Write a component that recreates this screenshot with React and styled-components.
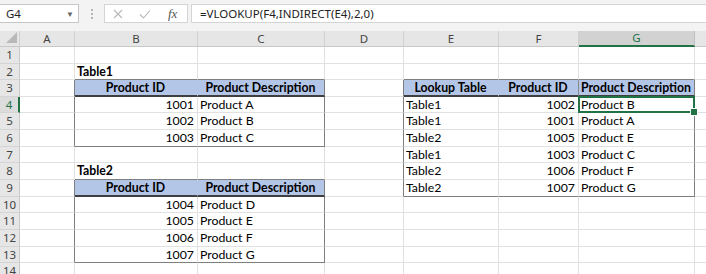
import React from 'react';
import styled, { createGlobalStyle } from 'styled-components';

const GlobalStyle = createGlobalStyle`
  html, body {
    margin: 0;
    padding: 0;
    background: #fff;
    overflow: hidden;
  }
  * { box-sizing: border-box; }
`;

const GREEN = '#217346';
const GRID = '#e1e1e1';
const EDGE = '#7f7f7f';

// H is only a sliver at the right edge, its letter is off screen
const COLS = ['A', 'B', 'C', 'D', 'E', 'F', 'G', ''];
const COL_W = [55, 123, 127, 79, 95, 80, 116, 40];
const ROW_H = [17, 16, 17, 16, 17, 17, 16, 17, 17, 16, 17, 17, 16, 17];
const ACTIVE = { r: 4, c: 6 };

// tables: r0/c0 = header cell, rows[0] = header
const TABLES = [
  {
    r0: 3, c0: 1, align: ['right', 'left'],
    rows: [
      ['Product ID', 'Product Description'],
      ['1001', 'Product A'],
      ['1002', 'Product B'],
      ['1003', 'Product C'],
    ],
  },
  {
    r0: 9, c0: 1, align: ['right', 'left'],
    rows: [
      ['Product ID', 'Product Description'],
      ['1004', 'Product D'],
      ['1005', 'Product E'],
      ['1006', 'Product F'],
      ['1007', 'Product G'],
    ],
  },
  {
    r0: 3, c0: 4, align: ['left', 'right', 'left'],
    rows: [
      ['Lookup Table', 'Product ID', 'Product Description'],
      ['Table1', '1002', 'Product B'],
      ['Table1', '1001', 'Product A'],
      ['Table2', '1005', 'Product E'],
      ['Table1', '1003', 'Product C'],
      ['Table2', '1006', 'Product F'],
      ['Table2', '1007', 'Product G'],
    ],
  },
];

const LABELS = { '2,1': 'Table1', '8,1': 'Table2' };

function findTable(r, c) {
  for (const t of TABLES) {
    const r1 = t.r0 + t.rows.length - 1;
    const c1 = t.c0 + t.rows[0].length - 1;
    if (r >= t.r0 && r <= r1 && c >= t.c0 && c <= c1) return { t, r1, c1 };
  }
  return null;
}

function cellInfo(r, c) {
  const hit = findTable(r, c);
  const right = findTable(r, c + 1);
  const below = findTable(r + 1, c);
  let info = { text: LABELS[`${r},${c}`] || '', align: 'left', bold: !!LABELS[`${r},${c}`] };
  let rightColor = GRID;
  let bottomColor = GRID;
  let bottomWidth = 1;

  if (hit) {
    const { t, r1, c1 } = hit;
    const head = r === t.r0;
    info = {
      text: t.rows[r - t.r0][c - t.c0],
      align: head ? 'center' : t.align[c - t.c0],
      bold: head,
      fill: head ? '#b4c6e7' : null,
    };
    if (c === c1) rightColor = EDGE;
    else if (head) rightColor = '#b4c6e7';
    if (head) { bottomColor = '#3f3f3f'; bottomWidth = 2; }
    else if (r === r1) bottomColor = EDGE;
  }
  if (right && c + 1 === right.t.c0) rightColor = EDGE;
  if (below && r + 1 === below.t.r0) bottomColor = EDGE;
  // the lookup table shows a divider before its last header cell
  if (r === 3 && c === 5) rightColor = '#8a8a8a';

  return { ...info, rightColor, bottomColor, bottomWidth };
}

const Page = styled.div`
  width: 706px;
  height: 274px;
  overflow: hidden;
  background: #fff;
  font-family: Lato, "Liberation Sans", sans-serif;
`;

const Toolbar = styled.div`
  height: 31px;
  background: #f3f3f3;
  display: flex;
  align-items: flex-start;
  padding-top: 4px;
`;

const NameBox = styled.div`
  width: 79px;
  height: 19px;
  background: #fff;
  border: 1px solid #c6c6c6;
  border-left: none;
  display: flex;
  align-items: center;
  justify-content: space-between;
  padding: 0 4px 0 6px;
  font-family: "Noto Sans", "Liberation Sans", sans-serif;
  font-size: 11.5px;
  color: #222;
`;

const Caret = styled.span`
  font-size: 8px;
  color: #666;
`;

const Grip = styled.div`
  width: 25px;
  height: 19px;
  display: flex;
  flex-direction: column;
  align-items: center;
  justify-content: center;
  gap: 2px;
`;

const Dot = styled.span`
  width: 2px;
  height: 2px;
  background: #b5b5b5;
`;

const FnBox = styled.div`
  width: 84px;
  height: 19px;
  background: #fff;
  border: 1px solid #d4d4d4;
  display: flex;
  align-items: center;
  padding-left: 8px;
  gap: 16px;
`;

const Fx = styled.span`
  font-family: "Liberation Serif", serif;
  font-style: italic;
  font-size: 13px;
  color: #555;
  margin-left: 1px;
`;

const Formula = styled.div`
  flex: 1;
  height: 19px;
  margin-left: 3px;
  margin-right: -4px;
  background: #fff;
  border: 1px solid #d4d4d4;
  display: flex;
  align-items: center;
  padding-left: 8px;
  font-family: "Noto Sans", "Liberation Sans", sans-serif;
  font-size: 11.5px;
  color: #222;
`;

const Sheet = styled.div`
  display: grid;
  grid-template-columns: 20px ${COL_W.map((w) => w + 'px').join(' ')};
  grid-template-rows: 16px ${ROW_H.map((h) => h + 'px').join(' ')};
`;

const Corner = styled.div`
  background: #e6e6e6;
  border-right: 1px solid #d0d0d0;
  border-bottom: 1px solid #c8c8c8;
  display: flex;
  align-items: flex-end;
  justify-content: flex-end;
  padding: 0 2px 3px 0;
`;

const ColHead = styled.div`
  background: ${(p) => (p.$sel ? '#d2d2d2' : '#e6e6e6')};
  color: ${(p) => (p.$sel ? GREEN : '#444')};
  border-right: 1px solid ${(p) => (p.$sel ? '#c0c0c0' : '#d0d0d0')};
  border-bottom: ${(p) => (p.$sel ? `2px solid ${GREEN}` : '1px solid #c8c8c8')};
  display: flex;
  align-items: center;
  justify-content: center;
  font-family: "Noto Sans", "Liberation Sans", sans-serif;
  font-size: 11.5px;
  line-height: 1;
`;

const RowHead = styled.div`
  background: ${(p) => (p.$sel ? '#dcdcdc' : '#e6e6e6')};
  color: ${(p) => (p.$sel ? GREEN : '#444')};
  border-right: ${(p) => (p.$sel ? `2px solid ${GREEN}` : '1px solid #c8c8c8')};
  border-bottom: 1px solid #d4d4d4;
  display: flex;
  align-items: center;
  justify-content: center;
  font-family: "Noto Sans", "Liberation Sans", sans-serif;
  font-size: 11.5px;
  line-height: 1;
`;

const Cell = styled.div`
  position: relative;
  background: ${(p) => p.$fill || '#fff'};
  border-right: 1px solid ${(p) => p.$right};
  border-bottom: ${(p) => p.$bw}px solid ${(p) => p.$bottom};
  display: flex;
  align-items: center;
  justify-content: ${(p) =>
    p.$align === 'right' ? 'flex-end' : p.$align === 'center' ? 'center' : 'flex-start'};
  padding: 1px 3px 0 2px;
  font-size: 12.3px;
  font-weight: ${(p) => (p.$bold ? 700 : 400)};
  color: #000;
  white-space: nowrap;
  overflow: visible;
  line-height: 1;
  z-index: ${(p) => (p.$active ? 2 : 'auto')};

  ${(p) =>
    p.$active &&
    `
    &::after {
      content: '';
      position: absolute;
      top: -1px;
      left: -1px;
      right: -1px;
      bottom: -1px;
      border: 2px solid ${GREEN};
      pointer-events: none;
    }
    &::before {
      content: '';
      position: absolute;
      right: -4px;
      bottom: -4px;
      width: 6px;
      height: 6px;
      background: ${GREEN};
      border: 1px solid #fff;
      z-index: 3;
    }
  `}
`;

function CrossIcon() {
  return (
    <svg width="10" height="10" viewBox="0 0 10 10">
      <path d="M1 1 L9 9 M9 1 L1 9" stroke="#b8b8b8" strokeWidth="1.1" fill="none" />
    </svg>
  );
}

function CheckIcon() {
  return (
    <svg width="12" height="10" viewBox="0 0 12 10">
      <path d="M1 5.5 L4.5 9 L11 1.5" stroke="#b8b8b8" strokeWidth="1.1" fill="none" />
    </svg>
  );
}

function CornerMark() {
  return (
    <svg width="11" height="11" viewBox="0 0 11 11">
      <polygon points="11,0 11,11 0,11" fill="#b9b9b9" />
    </svg>
  );
}

export default function App() {
  const rows = ROW_H.map((_, i) => i + 1);
  return (
    <Page>
      <GlobalStyle />
      <Toolbar>
        <NameBox>
          <span>G4</span>
          <Caret>▼</Caret>
        </NameBox>
        <Grip>
          <Dot />
          <Dot />
          <Dot />
        </Grip>
        <FnBox>
          <CrossIcon />
          <CheckIcon />
          <Fx>fx</Fx>
        </FnBox>
        <Formula>=VLOOKUP(F4,INDIRECT(E4),2,0)</Formula>
      </Toolbar>

      <Sheet>
        <Corner>
          <CornerMark />
        </Corner>
        {COLS.map((col, c) => (
          <ColHead key={c} $sel={c === ACTIVE.c}>
            {col}
          </ColHead>
        ))}
        {rows.map((r) => (
          <React.Fragment key={r}>
            <RowHead $sel={r === ACTIVE.r}>{r}</RowHead>
            {COLS.map((col, c) => {
              const info = cellInfo(r, c);
              return (
                <Cell
                  key={c}
                  $fill={info.fill}
                  $right={info.rightColor}
                  $bottom={info.bottomColor}
                  $bw={info.bottomWidth}
                  $align={info.align}
                  $bold={info.bold}
                  $active={r === ACTIVE.r && c === ACTIVE.c}
                >
                  {info.text}
                </Cell>
              );
            })}
          </React.Fragment>
        ))}
      </Sheet>
    </Page>
  );
}
